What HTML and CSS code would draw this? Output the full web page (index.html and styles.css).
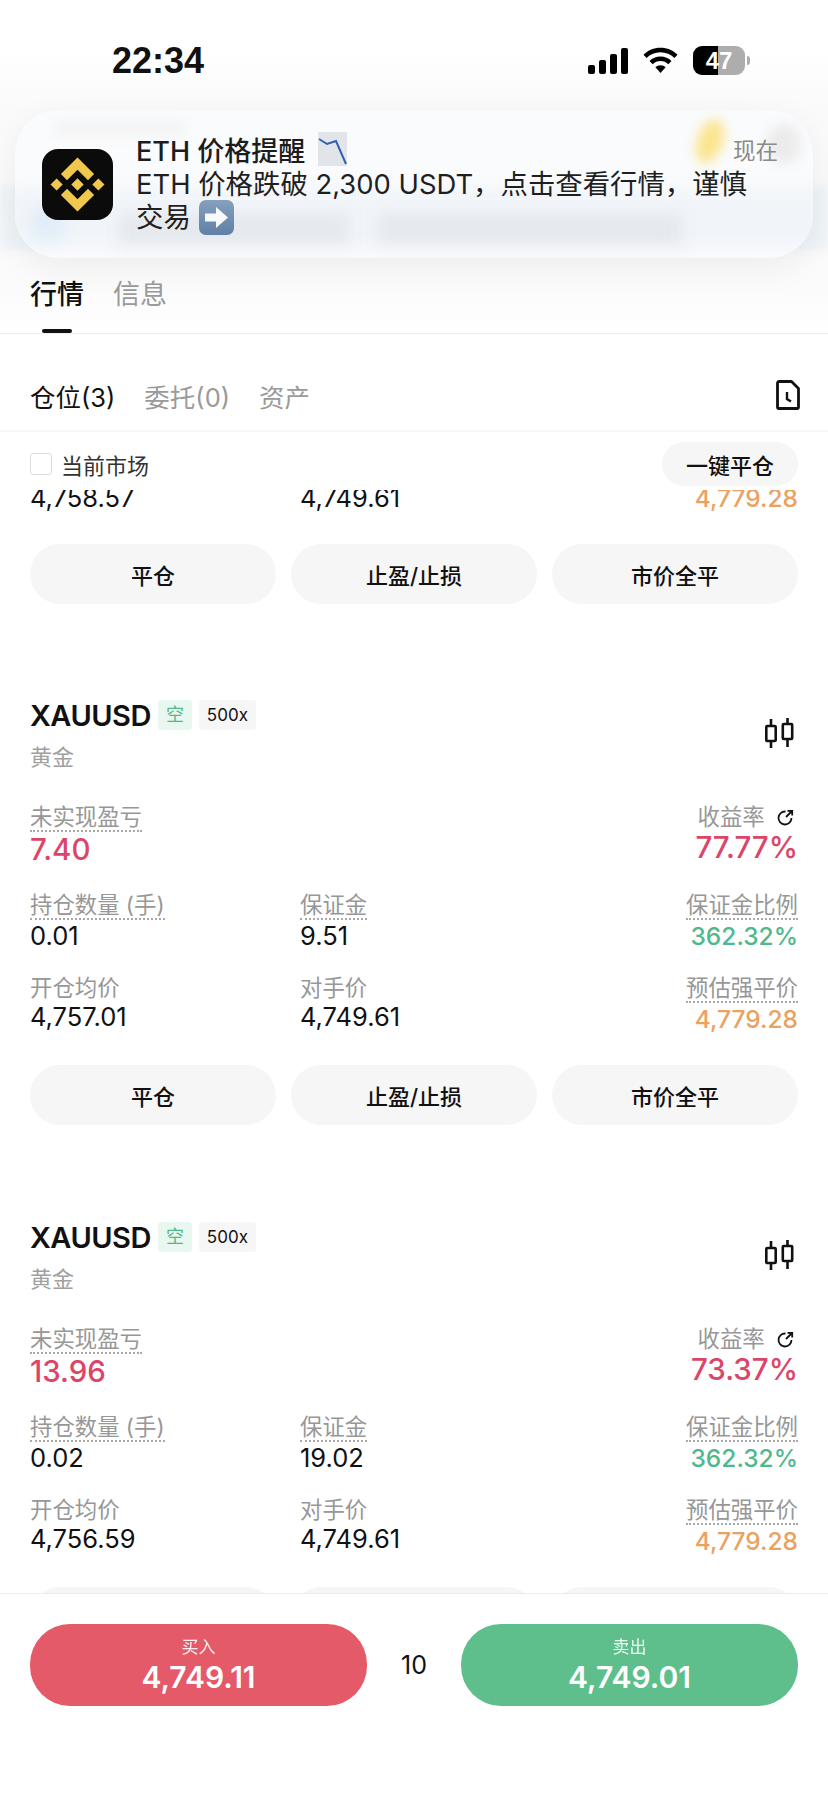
FILE: index.html

```html
<!DOCTYPE html>
<html lang="zh">
<head>
  <meta charset="UTF-8">
  <meta name="viewport" content="width=device-width, initial-scale=1.0">
  <title>行情</title>
  <link rel="stylesheet" href="styles.css">
</head>
<body>
  <div class="app">

    <!-- 顶部 -->
    <header class="top">
      <div class="status-bar">
        <span class="time">22:34</span>
        <div class="status-icons">
          <svg class="signal" width="40" height="26" viewBox="0 0 40 26"><rect x="0" y="17" width="7" height="9" rx="2"/><rect x="11" y="12" width="7" height="14" rx="2"/><rect x="22" y="6" width="7" height="20" rx="2"/><rect x="33" y="0" width="7" height="26" rx="2"/></svg>
          <svg class="wifi" width="35" height="27" viewBox="0 0 37 27"><path d="M18.500 0C11.500 0 5.200 2.800.5 7.300l3.300 3.500C7.600 7.100 12.800 4.900 18.500 4.900s10.900 2.200 14.700 5.900l3.300-3.500C31.800 2.800 25.500 0 18.500 0z"/><path d="M18.500 9.300c-4.500 0-8.600 1.800-11.600 4.700l3.300 3.500c2.100-2.100 5.100-3.400 8.300-3.400s6.200 1.300 8.300 3.400l3.300-3.500c-3-2.900-7.100-4.700-11.600-4.700z"/><path d="M18.500 18.400c-2.100 0-4 .8-5.400 2.200l5.400 6 5.400-6c-1.400-1.400-3.300-2.200-5.400-2.200z"/></svg>
          <div class="battery"><span class="battery-num">47</span></div>
          <span class="battery-cap"></span>
        </div>
      </div>

      <div class="backdrop"></div>

      <nav class="main-tabs">
        <span class="main-tab active">行情</span>
        <span class="main-tab">信息</span>
      </nav>

      <!-- 通知 -->
      <div class="notice">
        <div class="notice-blur">
          <span class="blur-top"></span>
          <span class="blur-yellow"></span>
          <span class="blur-grey"></span>
          <span class="blur-band"></span>
          <span class="blur-dot"></span>
          <span class="blur-text one"></span>
          <span class="blur-text two"></span>
        </div>
        <svg class="app-logo" width="71" height="71" viewBox="0 0 71 71">
          <rect width="71" height="71" rx="16" fill="#0b0b0b"/>
          <g transform="translate(-7.700 -7.700) scale(2.700)" fill="#efc84d">
            <path d="M12.116 14.404L16 10.520l3.886 3.886 2.260-2.260L16 6l-6.144 6.144 2.260 2.260zM6 16l2.260-2.260L10.520 16l-2.260 2.260L6 16zm6.116 1.596L16 21.480l3.886-3.886 2.260 2.259L16 26l-6.144-6.144 2.260-2.260zM21.480 16l2.260-2.260L26 16l-2.260 2.260L21.480 16zM18.292 16L16 18.294 13.705 16 16 13.706 18.292 16z"/>
          </g>
        </svg>
        <div class="notice-body">
          <div class="notice-title">
            <span>ETH 价格提醒</span>
            <svg class="emoji-chart" width="29" height="34" viewBox="0 0 29 34"><rect width="29" height="34" fill="#e1e4e9"/><path d="M1 7l8 5 9-3 10 23" fill="none" stroke="#3060b0" stroke-width="2"/></svg>
            <span class="notice-time">现在</span>
          </div>
          <p class="notice-text">ETH 价格跌破 2,300 USDT，点击查看行情，谨慎交易 <svg class="emoji-arrow" width="35" height="35" viewBox="0 0 35 35"><defs><linearGradient id="arrowBg" x1="0" y1="0" x2="0" y2="1"><stop offset="0" stop-color="#86a0bd"/><stop offset="1" stop-color="#5f80a6"/></linearGradient></defs><rect width="35" height="35" rx="7" fill="url(#arrowBg)"/><path d="M6 13.500h11V7l12 10.500L17 28v-6.500H6z" fill="#f7f9fb"/></svg></p>
        </div>
      </div>
    </header>

    <!-- 仓位 -->
    <section class="sub-tabs">
      <span class="sub-tab active">仓位(3)</span>
      <span class="sub-tab">委托(0)</span>
      <span class="sub-tab">资产</span>
      <svg class="history-icon" width="24" height="30" viewBox="0 0 24 30"><path d="M3 1.500h12.500l7 7V27a1.500 1.500 0 0 1-1.500 1.500H3A1.500 1.500 0 0 1 1.500 27V3A1.500 1.500 0 0 1 3 1.500z" fill="none" stroke="#111" stroke-width="2.800" stroke-linejoin="round"/><path d="M11 12v7l4 2.500" fill="none" stroke="#111" stroke-width="2.400"/></svg>
    </section>

    <div class="filter-row">
      <label class="market-check"><span class="check-box"></span>当前市场</label>
      <button class="close-all">一键平仓</button>
    </div>

    <main class="positions">
      <!-- 滚动到一半的那张卡片 -->
      <div class="card first-card">
        <div class="data-row">
          <div class="cell"><span class="value">4,758.57</span></div>
          <div class="cell"><span class="value">4,749.61</span></div>
          <div class="cell right"><span class="value orange">4,779.28</span></div>
        </div>
        <div class="actions">
          <button>平仓</button>
          <button>止盈/止损</button>
          <button>市价全平</button>
        </div>
      </div>

      <div class="card">
        <div class="card-head">
          <div>
            <div class="symbol-row">
              <span class="symbol">XAUUSD</span>
              <span class="chip chip-short">空</span>
              <span class="chip chip-lever">500x</span>
            </div>
            <div class="symbol-name">黄金</div>
          </div>
          <svg class="candle-icon" width="29" height="30" viewBox="0 0 29 30"><path d="M6 1v7M6 23v7M22.500 0v6M22.500 21v8" stroke="#111" stroke-width="2.600" fill="none"/><rect x="1.300" y="8" width="9.400" height="15" rx="1" fill="none" stroke="#111" stroke-width="2.600"/><rect x="17.800" y="6" width="9.400" height="15" rx="1" fill="none" stroke="#111" stroke-width="2.600"/></svg>
        </div>
        <div class="data-row pnl-row">
          <div class="cell wide"><span class="label dotted">未实现盈亏</span><span class="value big red">7.40</span></div>
          <div class="cell right"><span class="label">收益率 <svg class="share-icon" width="17" height="17" viewBox="0 0 17 17"><path d="M8.500 2.500A6.500 6.500 0 1 0 14.500 9" fill="none" stroke="#111" stroke-width="1.800"/><path d="M9 8l6-6M10.500 1.800h4.700v4.700" fill="none" stroke="#111" stroke-width="1.800"/></svg></span><span class="value big red">77.77%</span></div>
        </div>
        <div class="data-row">
          <div class="cell"><span class="label dotted">持仓数量 (手)</span><span class="value">0.01</span></div>
          <div class="cell"><span class="label dotted">保证金</span><span class="value">9.51</span></div>
          <div class="cell right"><span class="label dotted">保证金比例</span><span class="value green">362.32%</span></div>
        </div>
        <div class="data-row">
          <div class="cell"><span class="label">开仓均价</span><span class="value">4,757.01</span></div>
          <div class="cell"><span class="label">对手价</span><span class="value">4,749.61</span></div>
          <div class="cell right"><span class="label dotted">预估强平价</span><span class="value orange">4,779.28</span></div>
        </div>
        <div class="actions">
          <button>平仓</button>
          <button>止盈/止损</button>
          <button>市价全平</button>
        </div>
      </div>

      <div class="card">
        <div class="card-head">
          <div>
            <div class="symbol-row">
              <span class="symbol">XAUUSD</span>
              <span class="chip chip-short">空</span>
              <span class="chip chip-lever">500x</span>
            </div>
            <div class="symbol-name">黄金</div>
          </div>
          <svg class="candle-icon" width="29" height="30" viewBox="0 0 29 30"><path d="M6 1v7M6 23v7M22.500 0v6M22.500 21v8" stroke="#111" stroke-width="2.600" fill="none"/><rect x="1.300" y="8" width="9.400" height="15" rx="1" fill="none" stroke="#111" stroke-width="2.600"/><rect x="17.800" y="6" width="9.400" height="15" rx="1" fill="none" stroke="#111" stroke-width="2.600"/></svg>
        </div>
        <div class="data-row pnl-row">
          <div class="cell wide"><span class="label dotted">未实现盈亏</span><span class="value big red">13.96</span></div>
          <div class="cell right"><span class="label">收益率 <svg class="share-icon" width="17" height="17" viewBox="0 0 17 17"><path d="M8.500 2.500A6.500 6.500 0 1 0 14.500 9" fill="none" stroke="#111" stroke-width="1.800"/><path d="M9 8l6-6M10.500 1.800h4.700v4.700" fill="none" stroke="#111" stroke-width="1.800"/></svg></span><span class="value big red">73.37%</span></div>
        </div>
        <div class="data-row">
          <div class="cell"><span class="label dotted">持仓数量 (手)</span><span class="value">0.02</span></div>
          <div class="cell"><span class="label dotted">保证金</span><span class="value">19.02</span></div>
          <div class="cell right"><span class="label dotted">保证金比例</span><span class="value green">362.32%</span></div>
        </div>
        <div class="data-row">
          <div class="cell"><span class="label">开仓均价</span><span class="value">4,756.59</span></div>
          <div class="cell"><span class="label">对手价</span><span class="value">4,749.61</span></div>
          <div class="cell right"><span class="label dotted">预估强平价</span><span class="value orange">4,779.28</span></div>
        </div>
        <div class="actions">
          <button>平仓</button>
          <button>止盈/止损</button>
          <button>市价全平</button>
        </div>
      </div>
    </main>

    <!-- 底部买卖 -->
    <footer class="trade-bar">
      <button class="trade-btn buy"><span class="trade-label">买入</span><span class="trade-price">4,749.11</span></button>
      <span class="spread">10</span>
      <button class="trade-btn sell"><span class="trade-label">卖出</span><span class="trade-price">4,749.01</span></button>
    </footer>
  </div>
</body>
</html>
```

FILE: styles.css

```css
:root {
  --text-color: #111;
  --muted: #979797;
  --red: #dc4568;
  --green: #4fb98c;
  --orange: #eba15f;
  --btn-bg: #f6f6f6;
  --line: #efefef;
}

* {
  box-sizing: border-box;
}

body {
  margin: 0;
  background: #fff;
  color: var(--text-color);
  font-family: Inter, "Noto Sans CJK SC", sans-serif;
}

button {
  font-family: inherit;
  border: none;
  cursor: pointer;
}

.app {
  width: 828px;
  height: 1800px;
  display: flex;
  flex-direction: column;
  overflow: hidden;
}

/* 顶部 */
.top {
  position: relative;
  height: 334px;
  flex-shrink: 0;
  border-bottom: 1px solid var(--line);
  background: linear-gradient(#fff 0, #fff 50px, #fafafa 110px, #fbfbfb 290px, #fff 333px);
}

.status-bar {
  height: 110px;
  padding: 42px 0 0 112px;
  display: flex;
  justify-content: space-between;
}

.time {
  font-family: "Liberation Sans", sans-serif;
  font-size: 36px;
  font-weight: 700;
  line-height: 38px;
}

.status-icons {
  display: flex;
  align-items: flex-start;
  padding: 4px 78px 0 0;
}

.signal {
  margin: 2px 15px 0 0;
}

.wifi {
  margin: 1px 15px 0 0;
}

.battery {
  width: 52px;
  height: 29px;
  border-radius: 9px;
  background: linear-gradient(90deg, #000 0, #000 48%, #adadad 48%);
  text-align: center;
}

.battery-num {
  color: #fff;
  font-size: 24px;
  font-weight: 700;
  line-height: 29px;
  font-family: "Liberation Sans", sans-serif;
}

.battery-cap {
  width: 3px;
  height: 9px;
  margin: 10px 0 0 2px;
  background: #adadad;
  border-radius: 0 3px 3px 0;
}

/* 通知后面被模糊的页面 */
.backdrop {
  height: 65px;
  margin-top: 75px;
  background: #eef3f7;
  filter: blur(4px);
}

.main-tabs {
  position: absolute;
  left: 30px;
  bottom: 0;
  display: flex;
  gap: 29px;
}

.main-tab {
  font-size: 27px;
  line-height: 36px;
  height: 56px;
  color: #9a9a9a;
  position: relative;
}

.main-tab.active {
  color: var(--text-color);
  font-weight: 500;
}

.main-tab.active::after {
  content: "";
  position: absolute;
  left: 12px;
  bottom: 0;
  width: 30px;
  height: 4px;
  border-radius: 2px;
  background: #111;
}

/* 通知 */
.notice {
  position: absolute;
  left: 15px;
  top: 110px;
  width: 798px;
  height: 148px;
  border-radius: 44px;
  display: flex;
  background: rgba(250, 251, 253, 0.96);
  box-shadow: 0 10px 34px rgba(0, 0, 0, 0.06);
  overflow: hidden;
}

.notice-blur {
  position: absolute;
  inset: 0;
}

.notice-blur span {
  position: absolute;
  display: block;
}

.blur-top {
  left: 40px;
  top: 12px;
  width: 130px;
  height: 14px;
  background: #f3f3f3;
  filter: blur(6px);
}

.blur-yellow {
  left: 682px;
  top: 8px;
  width: 26px;
  height: 46px;
  border-radius: 50%;
  background: #fbe58f;
  transform: rotate(20deg);
  filter: blur(6px);
}

.blur-grey {
  left: 752px;
  top: 14px;
  width: 34px;
  height: 40px;
  border-radius: 50%;
  background: #ebebeb;
  filter: blur(6px);
}

.blur-band {
  left: -10px;
  right: -10px;
  top: 78px;
  height: 60px;
  background: #f1f5f9;
  filter: blur(8px);
}

.blur-dot {
  left: 14px;
  top: 94px;
  width: 38px;
  height: 38px;
  border-radius: 50%;
  background: #e2edf8;
  filter: blur(7px);
}

.blur-text {
  top: 104px;
  height: 30px;
  background: #e4e8ed;
  filter: blur(8px);
}

.blur-text.one {
  left: 104px;
  width: 230px;
}

.blur-text.two {
  left: 363px;
  width: 304px;
}

.app-logo {
  position: relative;
  flex-shrink: 0;
  margin: 39px 0 0 27px;
}

.notice-body {
  position: relative;
  width: 642px;
  margin: 20px 0 0 23px;
}

.notice-title {
  display: flex;
  align-items: center;
  font-size: 27px;
  font-weight: 500;
  height: 38px;
  color: #1c1c1c;
}

.emoji-chart {
  margin-left: 13px;
}

.notice-text {
  width: 616px;
  margin: 0;
  font-size: 27.400px;
  line-height: 32px;
  color: #1f1f1f;
}

.emoji-arrow {
  vertical-align: -8px;
}

.notice-time {
  margin-left: auto;
  font-size: 22.500px;
  font-weight: 400;
  color: #8a8a8a;
}

/* 仓位 */
.sub-tabs {
  height: 98px;
  flex-shrink: 0;
  padding: 26px 28px 0 30px;
  display: flex;
  align-items: center;
  gap: 29px;
  border-bottom: 2px solid #f6f6f6;
}

.sub-tab {
  font-size: 25.500px;
  color: #9a9a9a;
}

.sub-tab.active {
  color: var(--text-color);
}

.history-icon {
  margin-left: auto;
}

.filter-row {
  height: 58px;
  flex-shrink: 0;
  padding: 10px 30px 0;
  display: flex;
  justify-content: space-between;
  background: #fff;
}

.market-check {
  display: flex;
  align-items: center;
  gap: 9px;
  font-size: 22px;
  color: #333;
  height: 44px;
}

.check-box {
  width: 22px;
  height: 22px;
  border: 1px solid #ddd;
  border-radius: 3px;
}

.close-all {
  width: 136px;
  height: 44px;
  border-radius: 22px;
  background: var(--btn-bg);
  font-size: 22px;
  font-weight: 500;
  color: var(--text-color);
}

/* 卡片 */
.positions {
  flex: 1;
  overflow: hidden;
}

.card {
  padding: 0 30px;
  height: 522px;
}

.first-card {
  height: 198px;
  margin-top: -8px;
}

.card-head {
  display: flex;
  justify-content: space-between;
  align-items: flex-start;
  height: 115px;
  padding-top: 20px;
}

.candle-icon {
  margin: 18px 4px 0 0;
}

.symbol-row {
  display: flex;
  align-items: center;
  height: 30px;
}

.symbol {
  font-size: 29px;
  font-weight: 600;
  letter-spacing: -0.5px;
  margin-right: 7px;
}

.chip {
  height: 30px;
  line-height: 30px;
  font-size: 18px;
  text-align: center;
  border-radius: 3px;
}

.chip-short {
  width: 34px;
  color: #4fb98c;
  background: #e9f7f1;
  margin-right: 7px;
}

.chip-lever {
  width: 57px;
  background: #f6f6f6;
  font-size: 17px;
}

.symbol-name {
  margin-top: 12px;
  font-size: 22px;
  line-height: 30px;
  color: #a0a0a0;
}

.data-row {
  display: grid;
  grid-template-columns: 270px 1fr 1fr;
  height: 83px;
}

.pnl-row {
  grid-template-columns: 1fr auto;
  height: 96px;
  padding-top: 8px;
}

.cell {
  display: flex;
  flex-direction: column;
  align-items: flex-start;
}

.cell.right {
  align-items: flex-end;
}

.label {
  font-size: 22.400px;
  line-height: 27px;
  color: var(--muted);
}

.label.dotted {
  border-bottom: 2px dotted #a8a8a8;
}

.share-icon {
  margin: 0 4px 0 6px;
  vertical-align: -1px;
}

.value {
  font-size: 25.500px;
  line-height: 32px;
}

.value.big {
  font-size: 29.500px;
  line-height: 34px;
  font-weight: 500;
}

.red {
  color: var(--red);
}

.green {
  color: var(--green);
  font-size: 24.500px;
  font-weight: 500;
}

.orange {
  color: var(--orange);
  font-size: 24.500px;
  font-weight: 500;
}

.first-card .data-row {
  height: 62px;
}

.actions {
  display: grid;
  grid-template-columns: repeat(3, 1fr);
  gap: 15px;
  margin-top: 8px;
}

.first-card .actions {
  margin-top: 0;
}

.actions button {
  height: 60px;
  border-radius: 30px;
  background: var(--btn-bg);
  font-size: 22px;
  font-weight: 500;
  color: var(--text-color);
}

/* 底部买卖 */
.trade-bar {
  height: 207px;
  flex-shrink: 0;
  padding: 30px 30px 0;
  display: flex;
  align-items: flex-start;
  border-top: 1px solid #ececec;
  background: #fff;
}

.trade-btn {
  width: 337px;
  height: 82px;
  border-radius: 40px;
  color: #fff;
  display: flex;
  flex-direction: column;
  align-items: center;
  justify-content: center;
}

.buy {
  background: #e45a69;
}

.sell {
  background: #5fbf8c;
}

.trade-label {
  font-size: 17px;
  line-height: 24px;
  opacity: 0.9;
}

.trade-price {
  font-size: 30px;
  line-height: 36px;
  font-weight: 600;
}

.spread {
  flex: 1;
  text-align: center;
  font-size: 25px;
  line-height: 82px;
}
```
